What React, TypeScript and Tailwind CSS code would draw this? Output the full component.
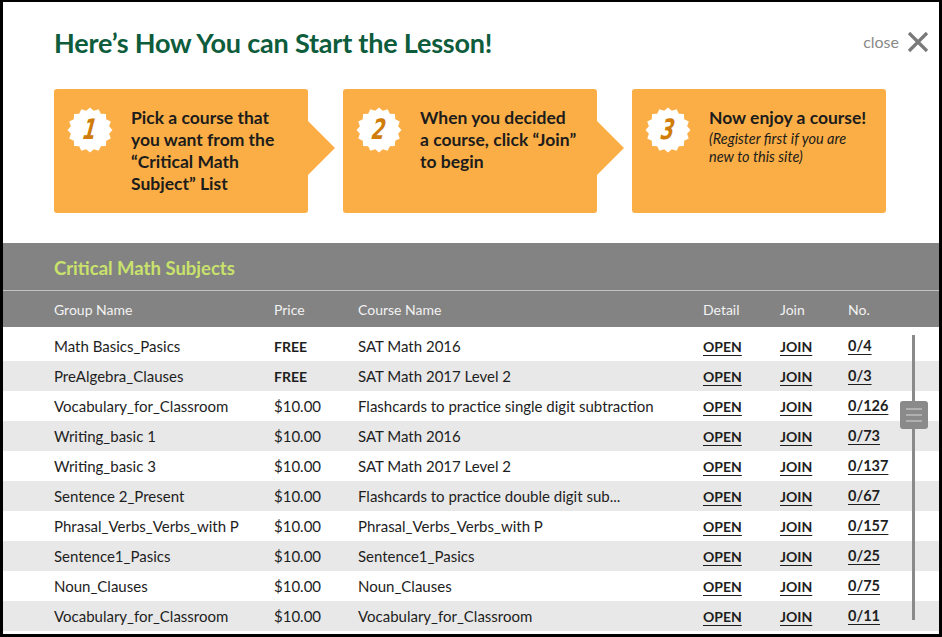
import React from "react";

const rows = [
  ["Math Basics_Pasics", "FREE", "SAT Math 2016", "0/4"],
  ["PreAlgebra_Clauses", "FREE", "SAT Math 2017 Level 2", "0/3"],
  ["Vocabulary_for_Classroom", "$10.00", "Flashcards to practice single digit subtraction", "0/126"],
  ["Writing_basic 1", "$10.00", "SAT Math 2016", "0/73"],
  ["Writing_basic 3", "$10.00", "SAT Math 2017 Level 2", "0/137"],
  ["Sentence 2_Present", "$10.00", "Flashcards to practice double digit sub...", "0/67"],
  ["Phrasal_Verbs_Verbs_with P", "$10.00", "Phrasal_Verbs_Verbs_with P", "0/157"],
  ["Sentence1_Pasics", "$10.00", "Sentence1_Pasics", "0/25"],
  ["Noun_Clauses", "$10.00", "Noun_Clauses", "0/75"],
  ["Vocabulary_for_Classroom", "$10.00", "Vocabulary_for_Classroom", "0/11"],
];

function starPoints(cx: number, cy: number, ro: number, ri: number, n: number) {
  const pts: string[] = [];
  for (let i = 0; i < n * 2; i++) {
    const r = i % 2 === 0 ? ro : ri;
    const a = (Math.PI * i) / n - Math.PI / 2;
    pts.push(`${(cx + r * Math.cos(a)).toFixed(2)},${(cy + r * Math.sin(a)).toFixed(2)}`);
  }
  return pts.join(" ");
}

function Badge({ n }: { n: string }) {
  return (
    <div className="relative w-[46px] h-[46px] shrink-0">
      <svg width="46" height="46" viewBox="0 0 46 46" className="absolute inset-0">
        <polygon points={starPoints(23, 23, 22.5, 19.5, 16)} fill="#ffffff" />
      </svg>
      <span
        className="absolute inset-0 flex items-center justify-center text-[#cf7c0a] italic font-black text-[28px] leading-none"
        style={{ fontFamily: "'DejaVu Sans Condensed', 'DejaVu Sans', sans-serif", transform: "scaleX(0.75) skewX(-10deg)" }}
      >
        {n}
      </span>
    </div>
  );
}

function Card({ n, arrow, children }: { n: string; arrow: boolean; children: React.ReactNode }) {
  return (
    <div className="relative w-[254px] h-[124px] bg-[#fbae45] rounded-[3px] flex pl-[13px] pt-[18px]">
      <Badge n={n} />
      <div className="ml-[18px]">{children}</div>
      {arrow && (
        <div className="absolute left-[254px] top-[32px] w-0 h-0 border-y-[27px] border-y-transparent border-l-[27px] border-l-[#fbae45]" />
      )}
    </div>
  );
}

export default function App() {
  return (
    <div className="w-[942px] h-[637px] bg-black pl-[3px] pr-[3px] pt-[2px] pb-[3px]" style={{ fontFamily: "Lato, 'Open Sans', sans-serif" }}>
      <div className="relative w-full h-full bg-white overflow-hidden flex flex-col">
        <div className="flex items-start justify-between pl-[51px] pr-[10px] pt-[25px]">
          <h1 className="text-[27px] leading-[32px] font-bold text-[#0d5c3b] tracking-[-0.2px]">Here’s How You can Start the Lesson!</h1>
          <div className="flex items-center gap-[8px] mt-[3px]">
            <span className="text-[16px] text-[#8a8a8a]">close</span>
            <svg width="22" height="22" viewBox="0 0 22 22">
              <path d="M2 2 L20 20 M20 2 L2 20" stroke="#7a7a7a" strokeWidth="3.2" strokeLinecap="butt" />
            </svg>
          </div>
        </div>

        <div className="flex gap-[35px] pl-[51px] mt-[30px]">
          <Card n="1" arrow>
            <p className="text-[17.5px] leading-[22px] font-bold text-[#1c1c1c] whitespace-nowrap">
              Pick a course that<br />you want from the<br />“Critical Math<br />Subject” List
            </p>
          </Card>
          <Card n="2" arrow>
            <p className="text-[17.5px] leading-[22px] font-bold text-[#1c1c1c] whitespace-nowrap">
              When you decided<br />a course, click “Join”<br />to begin
            </p>
          </Card>
          <Card n="3" arrow={false}>
            <p className="text-[17.5px] leading-[22px] font-bold text-[#1c1c1c] whitespace-nowrap">Now enjoy a course!</p>
            <p className="text-[14.5px] leading-[18px] italic text-[#1c1c1c] whitespace-nowrap mt-[1px]">
              (Register first if you are<br />new to this site)
            </p>
          </Card>
        </div>

        <div className="mt-[30px] bg-[#838383]">
          <div className="h-[48px] flex items-center pl-[51px] border-b border-[#c2c2c2]">
            <span className="text-[18.5px] font-bold text-[#c9e26c] mt-[4px]">Critical Math Subjects</span>
          </div>
          <div className="h-[36px] grid grid-cols-[220px_84px_345px_77px_68px_1fr] items-center pl-[51px] text-[14px] text-[#f2f2f2]">
            <span>Group Name</span>
            <span>Price</span>
            <span>Course Name</span>
            <span>Detail</span>
            <span>Join</span>
            <span>No.</span>
          </div>
        </div>

        <div className="relative pt-[4px] flex-1">
          {rows.map((r, i) => (
            <div
              key={i}
              className={`h-[30px] grid grid-cols-[220px_84px_345px_77px_68px_1fr] items-center pl-[51px] text-[15px] text-[#1e1e1e] ${i % 2 === 1 ? "bg-[#e8e8e8]" : "bg-white"}`}
            >
              <span>{r[0]}</span>
              <span className={r[1] === "FREE" ? "font-bold text-[14px]" : ""}>{r[1]}</span>
              <span>{r[2]}</span>
              <span className="font-bold text-[14px] underline underline-offset-[3px]">OPEN</span>
              <span className="font-bold text-[14px] underline underline-offset-[3px]">JOIN</span>
              <span className="font-bold text-[14.5px] underline underline-offset-[3px]">{r[3]}</span>
            </div>
          ))}
          <div className="absolute left-[909px] top-[8px] w-[3px] h-[285px] bg-[#8a8a8a]" />
          <div className="absolute left-[897px] top-[74px] w-[28px] h-[28px] rounded-[3px] bg-[#8a8a8a] flex flex-col items-center justify-center gap-[4px]">
            <div className="w-[16px] h-[2px] bg-[#b0b0b0]" />
            <div className="w-[16px] h-[2px] bg-[#b0b0b0]" />
            <div className="w-[16px] h-[2px] bg-[#b0b0b0]" />
          </div>
        </div>
      </div>
    </div>
  );
}
